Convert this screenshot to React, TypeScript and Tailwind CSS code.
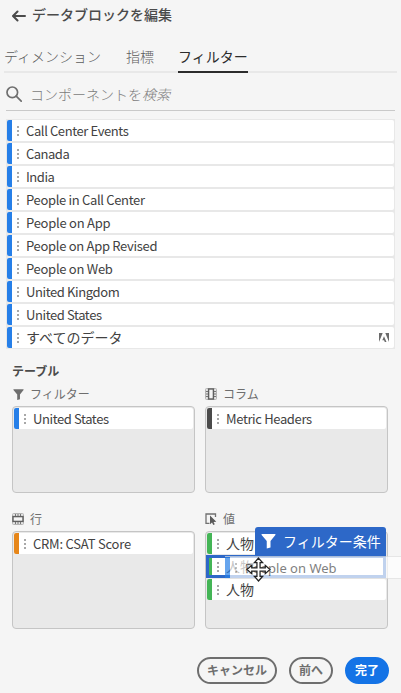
import React from 'react';

const dots = (
  <span className="flex w-[2px] flex-none flex-col gap-[2px]">
    <i className="h-[2px] w-[2px] bg-[#a8a8a8]" />
    <i className="h-[2px] w-[2px] bg-[#a8a8a8]" />
    <i className="h-[2px] w-[2px] bg-[#a8a8a8]" />
  </span>
);

function Item({ label, bar, text = 'text-[14px]', children }: { label: string; bar: string; text?: string; children?: React.ReactNode }) {
  return (
    <div className="flex h-[21px] flex-none items-center overflow-hidden rounded-[2px] bg-white">
      <span className={`mr-[5px] h-full w-[5px] flex-none ${bar}`} />
      {dots}
      <span className={`ml-[7px] flex-1 whitespace-nowrap leading-[21px] text-[#424242] ${text}`}>{label}</span>
      {children}
    </div>
  );
}

function Funnel({ className }: { className: string }) {
  return (
    <svg viewBox="0 0 12 12" className={className} fill="currentColor">
      <path d="M.9.3h10.2q.9 0 .4.8L7.6 6v5.1L4.6 12V6L.5 1.1Q0 .3.9.3z" />
    </svg>
  );
}

function TableIcon({ rotated = false }: { rotated?: boolean }) {
  return (
    <svg viewBox="0 0 12 12" className={`h-[12px] w-[12px] ${rotated ? 'rotate-90' : ''}`} fill="none">
      <rect x=".5" y=".5" width="11" height="11" rx="1" fill="#e3e3e3" stroke="#b4b4b4" />
      <path d="M1 3.500h2M1 6h2M1 8.500h2M9 3.500h2M9 6h2M9 8.500h2" stroke="#777" />
      <rect x="3.600" y="1" width="4.800" height="10" fill="#f5f5f5" stroke="#606060" strokeWidth="1.4" />
    </svg>
  );
}

function Panel({ icon, title, className, children }: { icon: React.ReactNode; title: string; className: string; children: React.ReactNode }) {
  return (
    <section>
      <h3 className="flex h-[20px] items-center text-[12px] font-normal leading-[20px] text-[#6e6e6e]">
        <span className="mr-[6px] flex h-[12px] w-[12px] items-center justify-center">{icon}</span>
        {title}
      </h3>
      <div className={`mt-[2px] flex flex-col gap-[2px] rounded-[4px] border border-[#c5c5c5] bg-[#e9e9e9] p-px ${className}`}>{children}</div>
    </section>
  );
}

const filters: [string, string][] = [
  ['Call Center Events', 'text-[13px] tracking-[-0.39px]'],
  ['Canada', 'text-[13px] tracking-[-0.5px]'],
  ['India', 'text-[13px] tracking-[-0.45px]'],
  ['People in Call Center', 'text-[13px] tracking-[-0.33px]'],
  ['People on App', 'text-[13px] tracking-[-0.25px]'],
  ['People on App Revised', 'text-[13px] tracking-[-0.3px]'],
  ['People on Web', 'text-[13px] tracking-[-0.28px]'],
  ['United Kingdom', 'text-[13px] tracking-[-0.39px]'],
  ['United States', 'text-[13px] tracking-[-0.4px]'],
];

export default function App() {
  return (
    <main className="relative h-[693px] w-[401px] overflow-hidden bg-[#f5f5f5] font-['Noto_Sans_CJK_JP',sans-serif] text-[#4b4b4b]">
      <header className="flex h-[28px] items-center pl-[12px]">
        <svg viewBox="0 0 14 12" className="mt-[4px] h-[12px] w-[14px]" fill="none" stroke="#4b4b4b" strokeWidth="2" strokeLinecap="round" strokeLinejoin="round">
          <path d="M13 6H1.5M5.5 1.5 1 6l4.500 4.500" />
        </svg>
        <h1 className="ml-[6px] text-[14px] font-medium leading-[20px]">データブロックを編集</h1>
      </header>

      <nav className="mx-[4px] mt-[18px] flex h-[27px] border-b-2 border-[#e8e8e8] text-[14px] font-light leading-[20px] text-[#5c5c5c]">
        <span className="w-[98px]">ディメンション</span>
        <span className="ml-[24px] w-[28px]">指標</span>
        <span className="ml-[24px] h-[27px] w-[70px] border-b-2 border-[#2c2c2c] font-normal text-[#2c2c2c]">フィルター</span>
      </nav>

      <div className="mx-[6px] mt-[7px] flex h-[31px] items-center border-b border-[#c9c9c9] pb-[2px]">
        <svg viewBox="0 0 16 16" className="h-[16px] w-[16px]" fill="none" stroke="#6e6e6e" strokeWidth="1.7" strokeLinecap="round">
          <circle cx="6.300" cy="6.300" r="5.300" />
          <path d="m10.200 10.200 5 5" />
        </svg>
        <span className="ml-[8px] text-[14px] font-light text-[#7c7c7c]">
          コンポーネントを<i>検索</i>
        </span>
      </div>

      <div className="mx-[6px] mt-[8px] flex flex-col gap-[2px] bg-[#e8e8e8] p-px">
        {filters.map(([label, text]) => (
          <Item key={label} label={label} bar="bg-[#267fe8]" text={text} />
        ))}
        <Item label="すべてのデータ" bar="bg-[#267fe8]" text="text-[14px]">
          <svg viewBox="0 0 10 9" className="mr-[5px] h-[9px] w-[10px]" fill="#6b6b6b">
            <path d="M0 0h3.700L0 9zM6.300 0H10v9zM5 3.200 7.500 9H5.800L5 7.200H3.300z" />
          </svg>
        </Item>
      </div>

      <h2 className="ml-[12px] mt-[12px] h-[20px] text-[12px] font-bold leading-[20px]">テーブル</h2>

      <div className="ml-[12px] mt-[3px] grid grid-cols-[183px_183px] gap-x-[10px] gap-y-[16px]">
        <Panel icon={<Funnel className="h-[11px] w-[11px]" />} title="フィルター" className="h-[87px]">
          <Item label="United States" bar="bg-[#267fe8]" text="text-[13px] tracking-[-0.4px]" />
        </Panel>
        <Panel icon={<TableIcon />} title="コラム" className="h-[87px]">
          <Item label="Metric Headers" bar="bg-[#4b4b4b]" text="text-[13px] tracking-[-0.36px]" />
        </Panel>
        <Panel icon={<TableIcon rotated />} title="行" className="h-[98px]">
          <Item label="CRM: CSAT Score" bar="bg-[#e68619]" text="text-[13px] tracking-[-0.22px]" />
        </Panel>
        <Panel
          icon={
            <svg viewBox="0 0 12 12" className="h-[12px] w-[12px]" fill="none">
              <path d="M4.500 10.300H1V1h9.500v3" stroke="#707070" strokeWidth="1.300" />
              <path d="M5 2.500v8.800l2-1.700 1.300 2.400 1.500-.8-1.300-2.300 2.800-.2z" fill="#5a5a5a" />
            </svg>
          }
          title="値"
          className="h-[98px]"
        >
          <Item label="人物" bar="bg-[#44b556]" />
          <Item label="人物" bar="bg-[#44b556]" />
          <Item label="人物" bar="bg-[#44b556]" />
        </Panel>
      </div>

      <footer className="mt-[28px] flex justify-end gap-[12px] pr-[12px] text-[12px] font-bold leading-[22px] text-[#6e6e6e]">
        <button className="flex h-[27px] w-[80px] justify-center rounded-full border-2 border-[#6e6e6e]">キャンセル</button>
        <button className="flex h-[27px] w-[44px] justify-center rounded-full border-2 border-[#6e6e6e]">前へ</button>
        <button className="flex h-[27px] w-[44px] justify-center rounded-full border-2 border-[#1473e6] bg-[#1473e6] text-white">完了</button>
      </footer>

      <div className="absolute left-[206px] top-[555px] h-[23px] w-[180px] border-[3px] border-[#2d68c8]" />
      <div className="absolute left-[255px] top-[527px] flex h-[30px] w-[131px] items-center rounded-t-[3px] bg-[#2d68c8] pb-[2px] pl-[6px] text-[14px] leading-[20px] text-white">
        <Funnel className="h-[16px] w-[15px]" />
        <span className="ml-[7px]">フィルター条件</span>
      </div>
      <div className="absolute left-[225px] top-[556px] flex h-[23px] w-[180px] items-center border-y border-[#e0e0e0] bg-white opacity-70">
        <span className="h-full w-[5px] bg-[#267fe8]" />
        <span className="ml-[5px]">{dots}</span>
        <span className="ml-[8px] mt-[2px] whitespace-nowrap font-['Noto_Sans',sans-serif] text-[13px] text-[#4b4b4b]">People on Web</span>
      </div>
      <svg viewBox="0 0 24 24" className="absolute left-[246px] top-[557px] h-[25px] w-[25px]" fill="white" stroke="#222" strokeWidth="1.2">
        <path d="M12 1 16 5.500h-2.500v5h5V8L23 12l-4.500 4v-2.500h-5v5H16L12 23l-4-4.500h2.500v-5h-5V16L1 12l4.500-4v2.500h5v-5H8z" />
      </svg>
    </main>
  );
}
